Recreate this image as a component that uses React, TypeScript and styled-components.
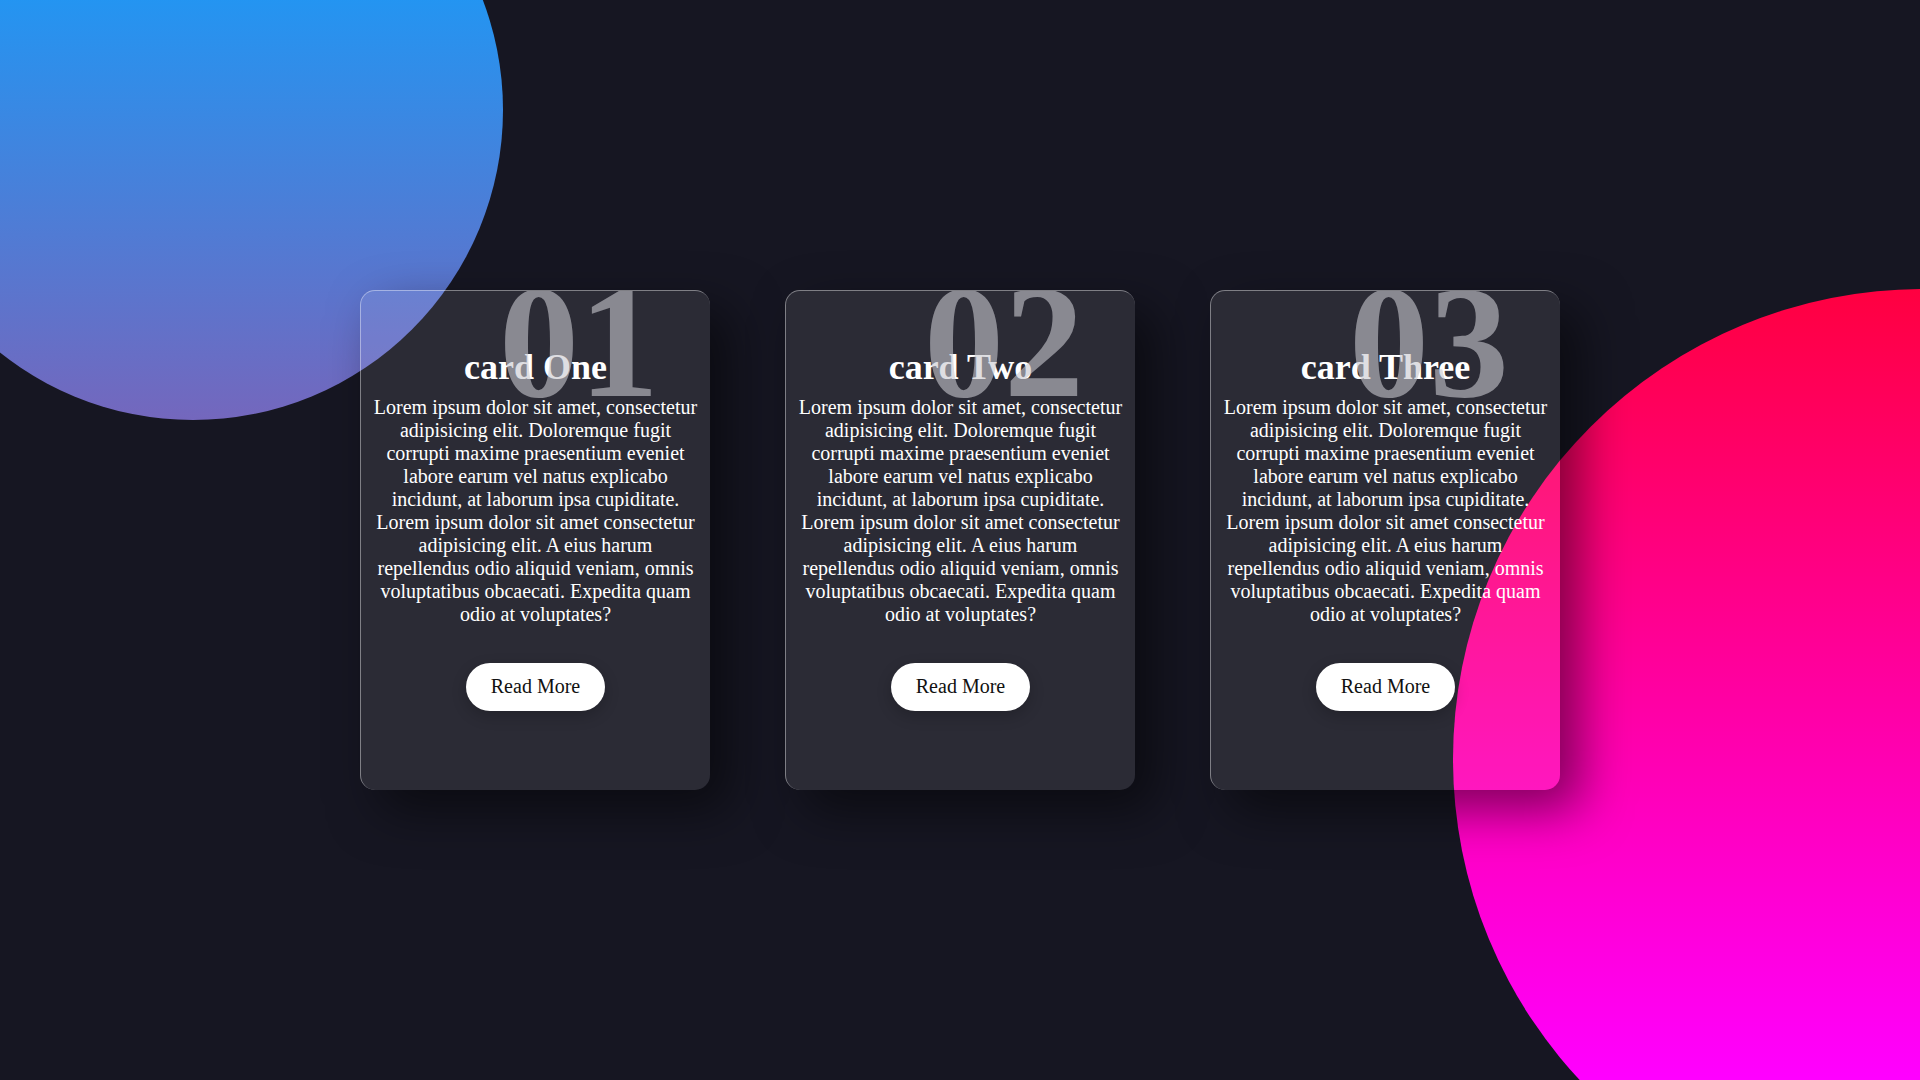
import React from "react";
import styled, { createGlobalStyle } from "styled-components";

const GlobalStyle = createGlobalStyle`
  * { box-sizing: border-box; }
  html, body {
    margin: 0;
    padding: 0;
    background: #161622;
    font-family: "Liberation Serif", "Times New Roman", serif;
  }
`;

const Page = styled.main`
  position: relative;
  width: 100vw;
  height: 100vh;
  overflow: hidden;
  background: #161622;
  display: flex;
  justify-content: center;
  align-items: center;
`;

const Circle = styled.div<{ $variant: "blue" | "pink" }>`
  position: absolute;
  border-radius: 50%;
  ${({ $variant }) =>
    $variant === "blue"
      ? `
    width: 620px;
    height: 620px;
    left: -117px;
    top: -200px;
    background: linear-gradient(to bottom, #2196f3 30%, #7467bd 100%);
  `
      : `
    width: 940px;
    height: 940px;
    left: 1453px;
    top: 289px;
    background: linear-gradient(to bottom, #ff0040 0%, #ff00ff 84%);
  `}
`;

const Row = styled.div`
  position: relative;
  z-index: 1;
  display: flex;
  gap: 75px;
`;

const Card = styled.article`
  position: relative;
  width: 350px;
  height: 500px;
  border-radius: 15px;
  background: rgba(255, 255, 255, 0.09);
  border-top: 1px solid rgba(255, 255, 255, 0.4);
  border-left: 1px solid rgba(255, 255, 255, 0.4);
  box-shadow: 20px 20px 50px rgba(0, 0, 0, 0.5);
  overflow: hidden;
  display: flex;
  flex-direction: column;
  align-items: center;
  padding: 55px 9px 0;
  text-align: center;
  color: #fff;
`;

const Number = styled.span`
  position: absolute;
  top: -41px;
  right: 51px;
  font-size: 160px;
  font-weight: 700;
  line-height: normal;
  color: rgba(200, 200, 206, 0.6);
  pointer-events: none;
  z-index: 2;
`;

const Title = styled.h3`
  position: relative;
  margin: 0 0 8px;
  font-size: 36px;
  font-weight: 700;
  line-height: normal;
  color: #fff;
`;

const Text = styled.p`
  position: relative;
  margin: 0;
  font-size: 20px;
  line-height: 23px;
  color: #fff;
`;

const Button = styled.a`
  position: relative;
  display: inline-block;
  margin-top: 37px;
  padding: 12px 25px 13px;
  background: #fff;
  color: #111;
  border-radius: 25px;
  font-size: 20px;
  line-height: 23px;
  text-decoration: none;
  box-shadow: 0 5px 15px rgba(0, 0, 0, 0.2);
`;

const TEXT =
  "Lorem ipsum dolor sit amet, consectetur adipisicing elit. Doloremque fugit corrupti maxime praesentium eveniet labore earum vel natus explicabo incidunt, at laborum ipsa cupiditate. Lorem ipsum dolor sit amet consectetur adipisicing elit. A eius harum repellendus odio aliquid veniam, omnis voluptatibus obcaecati. Expedita quam odio at voluptates?";

const cards = [
  { num: "01", title: "card One" },
  { num: "02", title: "card Two" },
  { num: "03", title: "card Three" },
];

export default function App() {
  return (
    <>
      <GlobalStyle />
      <Page>
        <Circle $variant="blue" />
        <Circle $variant="pink" />
        <Row>
          {cards.map((c) => (
            <Card key={c.num}>
              <Number>{c.num}</Number>
              <Title>{c.title}</Title>
              <Text>{TEXT}</Text>
              <Button href="#">Read More</Button>
            </Card>
          ))}
        </Row>
      </Page>
    </>
  );
}
